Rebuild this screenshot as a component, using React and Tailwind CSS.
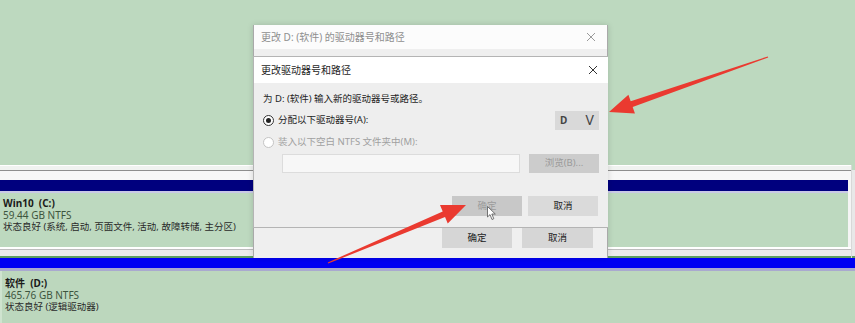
import React from 'react';

const FONT = "font-['Segoe_UI','Noto_Sans','Noto_Sans_CJK_SC',sans-serif]";

// polygon for a tapered annotation arrow, tail -> tip
const arrowPoints = (tail, tip, headLen = 24, headHalf = 10, neck = 3, tailW = 0.6) => {
  const [tx, ty] = tail;
  const [px, py] = tip;
  const dx = px - tx;
  const dy = py - ty;
  const len = Math.hypot(dx, dy);
  const ux = dx / len;
  const uy = dy / len;
  const nx = -uy;
  const ny = ux;
  const bx = px - ux * headLen;
  const by = py - uy * headLen;
  const pts = [
    [tx + nx * tailW, ty + ny * tailW],
    [bx + nx * neck, by + ny * neck],
    [bx + nx * headHalf, by + ny * headHalf],
    [px, py],
    [bx - nx * headHalf, by - ny * headHalf],
    [bx - nx * neck, by - ny * neck],
    [tx - nx * tailW, ty - ny * tailW],
  ];
  return pts.map((p) => p.join(',')).join(' ');
};

const Radio = ({ checked, disabled }) => (
  <span
    className={`w-[11px] h-[11px] rounded-full border flex items-center justify-center bg-white ${
      disabled ? 'border-[#c4c4c4]' : 'border-[#333]'
    }`}
  >
    {checked && <span className="w-[5px] h-[5px] rounded-full bg-[#222]" />}
  </span>
);

const CloseX = ({ dim }) => (
  <svg width="10" height="10" viewBox="0 0 10 10" className={dim ? 'text-[#9a9a9a]' : 'text-[#333]'}>
    <path d="M1 1L9 9M9 1L1 9" stroke="currentColor" strokeWidth="1" />
  </svg>
);

const DiskText = ({ name, size, status }) => (
  <div className="flex flex-col text-[10px] leading-[12px] text-[#2a2a2a]">
    <span className="font-bold text-[#1a1a1a] whitespace-pre">{name}</span>
    <span className="text-[#3d553d]">{size}</span>
    <span className="text-[9.5px]">{status}</span>
  </div>
);

export default function App() {
  return (
    <div className={`relative w-[855px] h-[323px] overflow-hidden bg-[#bdd9bf] ${FONT}`}>
      {/* disk management view */}
      <div className="flex flex-col h-full">
        <div className="h-[165px] shrink-0" />

        {/* Win10 (C:) */}
        <div className="h-[93px] shrink-0 flex">
          <div className="w-[852px] flex flex-col bg-[#f5f5f5] border-r border-[#d8d8d8]">
            <div className="h-[5px] bg-[#f0f3f0] border-t border-white" />
            <div className="h-px bg-[#8e8e8e]" />
            <div className="h-[9px] bg-[#f7f7f7]" />
            <div className="h-[11px] bg-[#00007e] mr-[3px]" />
            <div className="h-[2px] bg-[#c9c9e6] mr-[3px]" />
            <div className="h-[54px] bg-[#bdd9bf] mr-[3px] pl-[3px] pt-[4px]">
              <DiskText
                name="Win10  (C:)"
                size="59.44 GB NTFS"
                status="状态良好 (系统, 启动, 页面文件, 活动, 故障转储, 主分区)"
              />
            </div>
            <div className="h-[3px] bg-white border-b border-[#bdbdbd]" />
            <div className="flex-1 bg-[#ececec]" />
            <div className="h-[2px] bg-[#5f9f63]" />
          </div>
          <div className="flex-1 flex flex-col">
            <div className="h-[5px]" />
            <div className="flex-1 bg-[#e8e8e8]" />
            <div className="h-[2px] bg-[#5f9f63]" />
          </div>
        </div>

        {/* 软件 (D:) */}
        <div className="flex-1 flex flex-col">
          <div className="h-[10px] bg-[#0000f2]" />
          <div className="h-[3px] bg-[#a9a9cf]" />
          <div className="flex-1 bg-[#bcd7bd] border-l-2 border-[#cfe3cf] pl-[3px] pt-[6px]">
            <DiskText name="软件  (D:)" size="465.76 GB NTFS" status="状态良好 (逻辑驱动器)" />
          </div>
        </div>
      </div>

      {/* outer dialog */}
      <div className="absolute left-[253px] top-[25px] w-[355px] h-[233px] flex flex-col bg-[#efefef] border-l border-r border-[#a9a9a9] shadow-[0_0_6px_rgba(0,0,0,0.15)]">
        <div className="h-[24px] shrink-0 bg-[#fcfcfc] flex items-center justify-between pl-[7px] pr-[11px]">
          <span className="text-[10px] text-[#8f8f8f]">更改 D: (软件) 的驱动器号和路径</span>
          <CloseX dim />
        </div>
        <div className="flex-1" />
        <div className="h-[30px] shrink-0 flex justify-end items-start gap-[10px] pr-[14px] text-[9.5px]">
          <button className="w-[70px] h-[20px] bg-[#d6d6d6] text-[#222]">确定</button>
          <button className="w-[71px] h-[20px] bg-[#d6d6d6] text-[#222]">取消</button>
        </div>

        {/* inner dialog */}
        <div className="absolute left-[-1px] top-[31px] w-[355px] h-[172px] flex flex-col bg-[#eeeeee] border-t border-b border-l border-[#b4b4b4]">
          <div className="h-[26px] shrink-0 bg-white flex items-center justify-between pl-[7px] pr-[10px]">
            <span className="text-[10px] text-[#1e1e1e]">更改驱动器号和路径</span>
            <CloseX />
          </div>
          <div className="flex-1 flex flex-col pl-[9px] pr-[9px] pt-[9px] text-[9.5px] text-[#1e1e1e]">
            <div className="h-[14px] leading-[14px]">为 D: (软件) 输入新的驱动器号或路径。</div>
            <div className="mt-[4px] h-[20px] flex items-center justify-between">
              <div className="flex items-center gap-[4px]">
                <Radio checked />
                <span>分配以下驱动器号(A):</span>
              </div>
              <div className="w-[44px] h-[19px] bg-[#d9d9d9] flex items-center justify-between pl-[5px] pr-[5px]">
                <span className="text-[10px] font-bold text-[#444]">D</span>
                <span className="text-[14px] leading-none text-[#444]">V</span>
              </div>
            </div>
            <div className="mt-[2px] h-[20px] flex items-center gap-[4px] text-[#a0a0a0]">
              <Radio disabled />
              <span>装入以下空白 NTFS 文件夹中(M):</span>
            </div>
            <div className="mt-[2px] flex items-center justify-between pl-[19px]">
              <div className="w-[238px] h-[19px] bg-[#f7f7f7] border border-[#dcdcdc]" />
              <div className="w-[70px] h-[19px] bg-[#cccccc] flex items-center justify-center text-[#9a9a9a]">
                浏览(B)...
              </div>
            </div>
            <div className="mt-[23px] flex justify-end gap-[6px] pr-px">
              <div className="w-[70px] h-[20px] bg-[#c8c8c8] flex items-center justify-center text-[#9c9c9c]">确定</div>
              <div className="w-[70px] h-[20px] bg-[#dadada] flex items-center justify-center">取消</div>
            </div>
          </div>
        </div>
      </div>

      {/* annotation arrows */}
      <svg className="absolute inset-0 pointer-events-none" width="855" height="323">
        <polygon points={arrowPoints([768, 57], [609, 112])} fill="#ea3a30" />
        <polygon points={arrowPoints([328, 263], [466, 205])} fill="#ea3a30" />
      </svg>

      {/* mouse cursor */}
      <svg className="absolute left-[487px] top-[206px] pointer-events-none" width="10" height="15" viewBox="0 0 10 15">
        <path d="M0.5 0.5L0.5 11L3 8.6L5 13.5L6.8 12.7L4.8 8L8.3 8Z" fill="#fff" stroke="#555" strokeWidth="0.8" />
      </svg>
    </div>
  );
}
